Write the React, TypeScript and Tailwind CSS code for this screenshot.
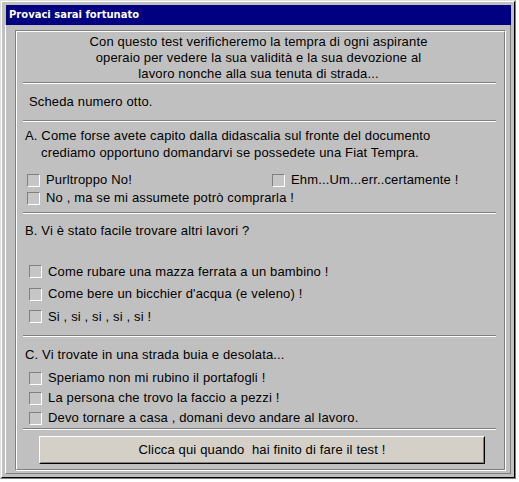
import React from "react";

const Sep = () => (
  <div className="ml-[6px] mr-[8px] h-[2px] border-t border-t-[#808080] border-b border-b-white" />
);

const Box = () => (
  <div className="w-[13px] h-[13px] shrink-0 border border-t-[#808080] border-l-[#808080] border-b-white border-r-white bg-[#c6c6c6]" />
);

const Row = ({ text, h }: { text: string; h: string }) => (
  <div className={`flex items-center pl-[12px] ${h}`}>
    <Box />
    <span className="ml-[6px] whitespace-pre">{text}</span>
  </div>
);

export default function App() {
  return (
    <div className="w-[519px] h-[482px] bg-white">
      <div
        className="w-[516px] h-[479px] border border-t-[#dfdfdf] border-l-[#dfdfdf] border-r-[#808080] border-b-[#808080]"
      >
        <div className="w-full h-full border border-t-white border-l-white border-r-black border-b-black bg-[#c0c0c0] pt-[3px] pl-[3px] pr-[3px] pb-[3px] flex flex-col">
          <div className="h-[20px] ml-[1px] bg-[#000080] flex items-center pl-[3px] text-white font-bold text-[10px] leading-none [font-family:'DejaVu_Sans',sans-serif]">
            Provaci sarai fortunato
          </div>
          <div className="flex-1 border-l border-l-white border-r border-r-[#808080] border-b border-b-[#808080] pt-[5px] pl-[9px] pr-[4px] pb-[2px] flex">
            <div className="flex-1 border border-t-[#808080] border-l-[#808080] border-r-white border-b-white">
              <div className="w-full h-full border border-t-white border-l-white border-r-[#808080] border-b-[#808080] flex flex-col text-[13px] tracking-[0.15px] text-black [font-family:'Liberation_Sans',Arial,sans-serif]">
                <div className="pt-[2px] pr-[4px] leading-[16px] text-center">
                  Con questo test verificheremo la tempra di ogni aspirante
                  <br />
                  operaio per vedere la sua validità e la sua devozione al
                  <br />
                  lavoro nonche alla sua tenuta di strada...
                </div>
                <Sep />
                <div className="h-[36px] flex items-center pl-[12px]">Scheda numero otto.</div>
                <Sep />
                <div className="pt-[5px] pl-[8px] leading-[17px]">
                  <div>A. Come forse avete capito dalla didascalia sul fronte del documento</div>
                  <div className="pl-[16px]">crediamo opportuno domandarvi se possedete una Fiat Tempra.</div>
                </div>
                <div className="mt-[10px] flex items-center h-[18px] pl-[10px]">
                  <div className="w-[245px] flex items-center">
                    <Box />
                    <span className="ml-[6px]">Purltroppo No!</span>
                  </div>
                  <Box />
                  <span className="ml-[6px]">Ehm...Um...err..certamente !</span>
                </div>
                <div className="flex items-center h-[18px] pl-[10px]">
                  <Box />
                  <span className="ml-[6px]">No , ma se mi assumete potrò comprarla !</span>
                </div>
                <div className="mt-[5px]">
                  <Sep />
                </div>
                <div className="pt-[8px] pl-[8px] leading-[17px]">B. Vi è stato facile trovare altri lavori ?</div>
                <div className="mt-[21px]">
                  <Row text="Come rubare una mazza ferrata a un bambino !" h="h-[23px]" />
                  <Row text="Come bere un bicchier d'acqua (e veleno) !" h="h-[22px]" />
                  <Row text="Si , si , si , si , si !" h="h-[23px]" />
                </div>
                <div className="mt-[7px]">
                  <Sep />
                </div>
                <div className="pt-[9px] pl-[8px] leading-[17px]">C. Vi trovate in una strada buia e desolata...</div>
                <div className="mt-[5px]">
                  <Row text="Speriamo non mi rubino il portafogli !" h="h-[20px]" />
                  <Row text="La persona che trovo la faccio a pezzi !" h="h-[20px]" />
                  <Row text="Devo tornare a casa , domani devo andare al lavoro." h="h-[20px]" />
                </div>
                <Sep />
                <div className="mt-[6px] ml-[22px] w-[446px] h-[28px] border border-t-white border-l-white border-r-black border-b-black">
                  <button className="w-full h-full border border-t-[#d4d0c8] border-l-[#d4d0c8] border-r-[#808080] border-b-[#808080] bg-[#d4d0c8] flex items-center justify-center whitespace-pre text-[13px] tracking-[0.15px] text-black">
                    Clicca qui quando  hai finito di fare il test !
                  </button>
                </div>
              </div>
            </div>
          </div>
        </div>
      </div>
    </div>
  );
}
